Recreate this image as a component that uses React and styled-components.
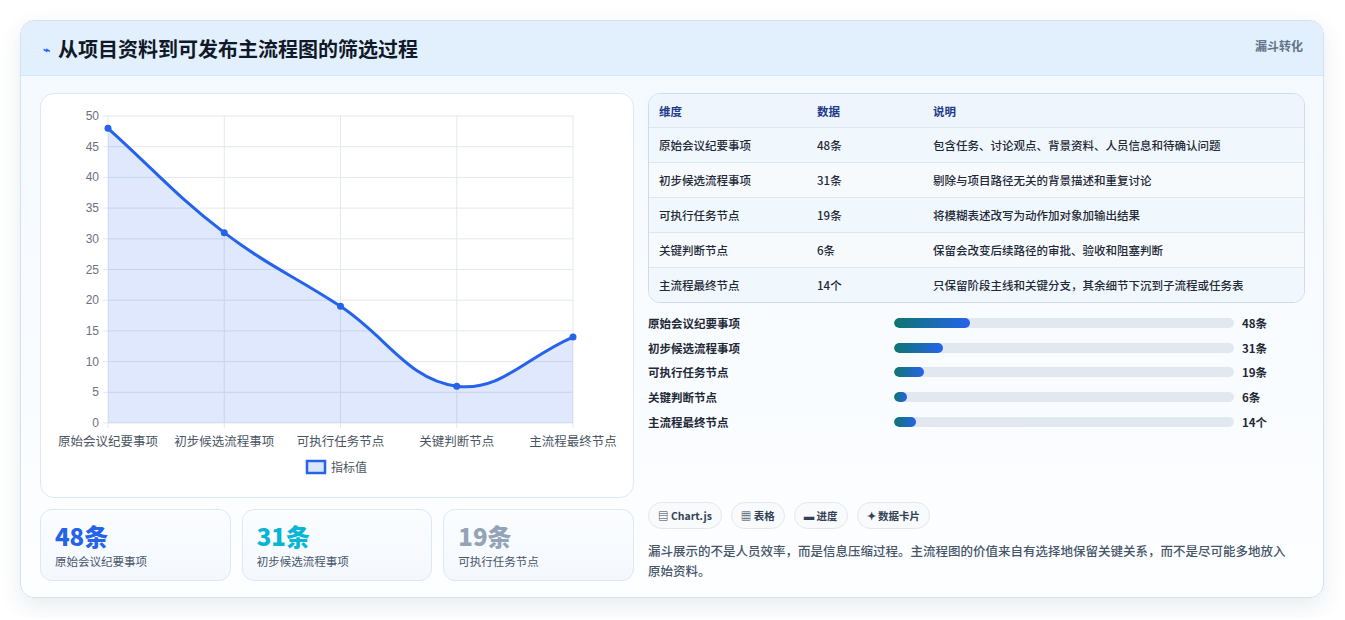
import React from "react";
import styled, { createGlobalStyle } from "styled-components";

const Global = createGlobalStyle`
  body { margin: 0; background: #fff; font-family: "Noto Sans CJK SC", "Noto Sans", sans-serif; }
`;
const Page = styled.div` padding: 20px 21px 20px 20px; `;
const Card = styled.div`
  border: 1px solid #cfe3f3; border-radius: 14px; overflow: hidden;
  background: linear-gradient(180deg, #f3f9ff 0%, #fdfeff 100%);
  box-shadow: 0 8px 22px rgba(30,60,100,0.10);
`;
const Header = styled.div`
  height: 54px; display: flex; align-items: center; justify-content: space-between;
  padding: 0 20px 0 22px; background: #e2f0fd; border-bottom: 1px solid #d3e6f6;
`;
const Title = styled.h1`
  margin: 0; font-size: 20px; font-weight: 700; color: #111827; display: flex; align-items: center; gap: 8px;
`;
const Badge = styled.span` font-size: 12px; font-weight: 700; color: #64748b; align-self: flex-start; margin-top: 16px; `;
const Body = styled.div` display: grid; grid-template-columns: 594px 1fr; gap: 14px; padding: 17px 18px 16px 19px; `;
const Col = styled.div` display: flex; flex-direction: column; `;
const ChartCard = styled.div`
  height: 403px; border: 1px solid #dde8f3; border-radius: 14px; background: #fff; position: relative;
`;
const Stats = styled.div` display: grid; grid-template-columns: repeat(3, 1fr); gap: 11px; margin-top: 11px; `;
const Stat = styled.div`
  height: 72px; border: 1px solid #dbe8f5; border-radius: 12px; background: linear-gradient(180deg,#fbfdff,#f4f8fd);
  padding: 12px 14px; box-sizing: border-box;
`;
const StatVal = styled.div` font-size: 24px; font-weight: 800; color: ${p => p.c}; line-height: 28px; `;
const StatLbl = styled.div` font-size: 11.5px; color: #475569; margin-top: 3px; `;
const Table = styled.div` border: 1px solid #cfdbe8; border-radius: 12px; overflow: hidden; background: #fbfdff; `;
const Row = styled.div`
  display: grid; grid-template-columns: 158px 116px 1fr; height: ${p => p.h}px; align-items: center; box-sizing: border-box;
  padding-left: 10px; font-size: 11.5px; line-height: 14px; font-weight: ${p => p.head ? 700 : 500};
  color: ${p => p.head ? "#1e3a8a" : "#1f2937"};
  background: ${p => p.head ? "#eef5fd" : p.alt ? "#f7fafd" : "#f1f8fd"};
  border-top: ${p => p.head ? "none" : "1px solid #dde7f0"};
`;
const Bars = styled.div` display: flex; flex-direction: column; gap: 8.7px; margin-top: 12px; `;
const BarRow = styled.div` display: grid; grid-template-columns: 246px 340px 1fr; align-items: center; height: 16px; font-size: 11.5px; font-weight: 600; color: #1f2937; `;
const Track = styled.div` height: 10px; border-radius: 5px; background: #e2e8f0; overflow: hidden; `;
const Fill = styled.div` height: 100%; border-radius: 5px; background: linear-gradient(90deg,#0f766e,#2563eb); `;
const BarVal = styled.span` padding-left: 8px; font-weight: 700; `;
const Tags = styled.div` display: flex; gap: 9px; margin-top: auto; `;
const Tag = styled.span`
  height: 27px; padding: 0 9px; border: 1px solid #e2e8f0; border-radius: 14px; background: #f8fafc;
  display: inline-flex; align-items: center; gap: 4px; font-size: 10.5px; font-weight: 700; color: #334155; box-sizing: border-box;
`;
const Note = styled.p` margin: 12px 0 0; padding-right: 12px; font-size: 12.5px; line-height: 20px; color: #475569; font-weight: 500; `;

const labels = ["原始会议纪要事项", "初步候选流程事项", "可执行任务节点", "关键判断节点", "主流程最终节点"];
const vals = [48, 31, 19, 6, 14];
const units = ["条", "条", "条", "条", "个"];
const desc = ["包含任务、讨论观点、背景资料、人员信息和待确认问题", "剔除与项目路径无关的背景描述和重复讨论", "将模糊表述改写为动作加对象加输出结果", "保留会改变后续路径的审批、验收和阻塞判断", "只保留阶段主线和关键分支，其余细节下沉到子流程或任务表"];

const X0 = 67, X1 = 532, Y0 = 22, Y1 = 329;
const pts = vals.map((v, i) => [X0 + i * (X1 - X0) / 4, Y1 - v * (Y1 - Y0) / 50]);
function curve() {
  const t = 0.4;
  const cps = pts.map((p, i) => {
    const prev = pts[i - 1] || p, next = pts[i + 1] || p;
    const d01 = Math.hypot(p[0] - prev[0], p[1] - prev[1]);
    const d12 = Math.hypot(next[0] - p[0], next[1] - p[1]);
    const s01 = d01 / (d01 + d12 || 1), s12 = d12 / (d01 + d12 || 1);
    const dx = next[0] - prev[0], dy = next[1] - prev[1];
    return [[p[0] - t * s01 * dx, Math.min(Y1, p[1] - t * s01 * dy)], [p[0] + t * s12 * dx, Math.min(Y1, p[1] + t * s12 * dy)]];
  });
  let d = `M${pts[0][0]},${pts[0][1]}`;
  for (let i = 1; i < pts.length; i++) d += ` C${cps[i - 1][1][0]},${cps[i - 1][1][1]} ${cps[i][0][0]},${cps[i][0][1]} ${pts[i][0]},${pts[i][1]}`;
  return d;
}
const line = curve();

function Chart() {
  const ticks = Array.from({ length: 11 }, (_, i) => i * 5);
  return (
    <svg width="594" height="403" style={{ display: "block" }}>
      {ticks.map(v => { const y = Y1 - v * (Y1 - Y0) / 50; return (
        <g key={v}>
          <line x1={X0 - 5} x2={X1} y1={y} y2={y} stroke="#e3e8ef" />
          <text x={X0 - 9} y={y + 4} fontSize="12" fill="#6b7280" textAnchor="end" fontFamily="Liberation Sans, sans-serif">{v}</text>
        </g>); })}
      {pts.map((p, i) => <line key={i} x1={p[0]} x2={p[0]} y1={Y0} y2={Y1 + 5} stroke="#e3e8ef" />)}
      <path d={`${line} L${X1},${Y1} L${X0},${Y1} Z`} fill="rgba(37,99,235,0.15)" />
      <path d={line} fill="none" stroke="#2563eb" strokeWidth="3" />
      {pts.map((p, i) => <circle key={i} cx={p[0]} cy={p[1]} r="3.5" fill="#2563eb" />)}
      {pts.map((p, i) => <text key={i} x={p[0]} y={352} fontSize="12.5" fill="#4b5563" textAnchor="middle">{labels[i]}</text>)}
      <rect x="266" y="367" width="18" height="12" fill="#dbe6fb" stroke="#2563eb" strokeWidth="2.5" />
      <text x="290" y="378" fontSize="12" fill="#4b5563">指标值</text>
    </svg>
  );
}

export default function App() {
  return (
    <Page>
      <Global />
      <Card>
        <Header>
          <Title><span style={{ color: "#2563eb", fontSize: 12 }}>⌁</span>从项目资料到可发布主流程图的筛选过程</Title>
          <Badge>漏斗转化</Badge>
        </Header>
        <Body>
          <Col>
            <ChartCard><Chart /></ChartCard>
            <Stats>
              <Stat><StatVal c="#2563eb">48条</StatVal><StatLbl>原始会议纪要事项</StatLbl></Stat>
              <Stat><StatVal c="#06b6d4">31条</StatVal><StatLbl>初步候选流程事项</StatLbl></Stat>
              <Stat><StatVal c="#94a3b8">19条</StatVal><StatLbl>可执行任务节点</StatLbl></Stat>
            </Stats>
          </Col>
          <Col>
            <Table>
              <Row head h={33}><span>维度</span><span>数据</span><span>说明</span></Row>
              {labels.map((l, i) => (
                <Row key={l} h={35} alt={i % 2 === 1}><span>{l}</span><span>{vals[i]}{units[i]}</span><span>{desc[i]}</span></Row>
              ))}
            </Table>
            <Bars>
              {labels.map((l, i) => (
                <BarRow key={l}>
                  <span>{l}</span>
                  <Track><Fill style={{ width: Math.max(13, vals[i] * 1.585) + "px" }} /></Track>
                  <BarVal>{vals[i]}{units[i]}</BarVal>
                </BarRow>
              ))}
            </Bars>
            <Tags>
              <Tag>▤ Chart.js</Tag><Tag>▦ 表格</Tag><Tag>▬ 进度</Tag><Tag>✦ 数据卡片</Tag>
            </Tags>
            <Note>漏斗展示的不是人员效率，而是信息压缩过程。主流程图的价值来自有选择地保留关键关系，而不是尽可能多地放入原始资料。</Note>
          </Col>
        </Body>
      </Card>
    </Page>
  );
}
